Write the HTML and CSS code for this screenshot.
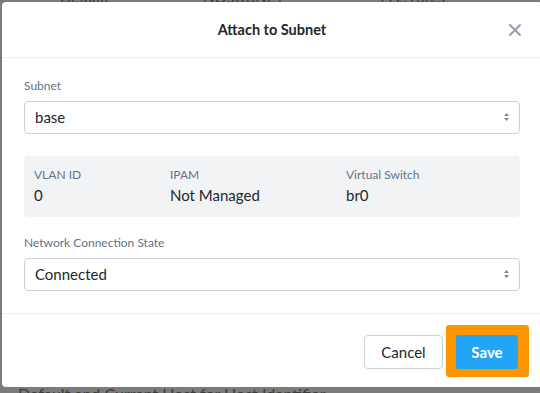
FILE: index.html
```html
<!DOCTYPE html>
<html lang="en">
<head>
  <meta charset="UTF-8" />
  <title>Attach to Subnet</title>
  <link rel="stylesheet" href="styles.css">
</head>
<body>
  <div class="backdrop-text top">Default  NOSUBNET  192.168.5  Linux</div>
  <div class="backdrop-text bottom">Default and Current Host for Host Identifier</div>

  <div class="modal">
    <div class="modal-header">
      <h3>Attach to Subnet</h3>
      <span class="close">
        <svg width="12" height="12" viewBox="0 0 12 12"><path d="M1 1L11 11M11 1L1 11" stroke="#8d9cae" stroke-width="1.8" stroke-linecap="round"/></svg>
      </span>
    </div>

    <div class="modal-body">
      <label class="field-label">Subnet</label>
      <div class="select">
        <span>base</span>
        <svg class="caret" width="7" height="10" viewBox="0 0 7 10"><path d="M3.5 1L6 4H1Z M3.5 9L6 6H1Z" fill="#7b8899"/></svg>
      </div>

      <div class="info-box">
        <div class="info-col vlan">
          <div class="info-label">VLAN ID</div>
          <div class="info-value">0</div>
        </div>
        <div class="info-col ipam">
          <div class="info-label">IPAM</div>
          <div class="info-value">Not Managed</div>
        </div>
        <div class="info-col">
          <div class="info-label">Virtual Switch</div>
          <div class="info-value">br0</div>
        </div>
      </div>

      <label class="field-label">Network Connection State</label>
      <div class="select">
        <span>Connected</span>
        <svg class="caret" width="7" height="10" viewBox="0 0 7 10"><path d="M3.5 1L6 4H1Z M3.5 9L6 6H1Z" fill="#7b8899"/></svg>
      </div>
    </div>

    <div class="modal-footer">
      <button class="btn cancel">Cancel</button>
      <span class="highlight"><button class="btn save">Save</button></span>
    </div>
  </div>
</body>
</html>
```

FILE: styles.css
```css
body {
  margin: 0;
  height: 393px;
  background: #7b7b7b;
  font-family: Lato, 'Open Sans', sans-serif;
  overflow: hidden;
  position: relative;
}

.backdrop-text {
  position: absolute;
  left: 60px;
  color: #3c3c3c;
  font-size: 15px;
  white-space: nowrap;
}

.backdrop-text.top {
  top: -12px;
  word-spacing: 90px;
}

.backdrop-text.bottom {
  top: 384px;
  left: 18px;
  font-size: 16px;
}

.modal {
  position: relative;
  margin: 2px 0 0 2px;
  width: 540px;
  height: 385px;
  background: #fff;
  border-radius: 4px;
  display: flex;
  flex-direction: column;
}

.modal-header {
  height: 55px;
  border-bottom: 1px solid #eceef1;
  display: flex;
  align-items: center;
  justify-content: center;
  position: relative;
}

.modal-header h3 {
  margin: 0;
  font-size: 14.5px;
  font-weight: 700;
  color: #22272e;
}

.close {
  position: absolute;
  right: 21px;
  top: 22px;
  display: flex;
}

.modal-body {
  padding: 20px 22px 22px 22px;
  display: flex;
  flex-direction: column;
  border-bottom: 1px solid #eceef1;
}

.field-label {
  font-size: 12px;
  line-height: 16px;
  color: #627386;
  margin-bottom: 7px;
}

.select {
  box-sizing: border-box;
  height: 33px;
  border: 1px solid #c9d0d8;
  border-radius: 4px;
  display: flex;
  align-items: center;
  justify-content: space-between;
  padding: 0 9px 2px 10px;
  font-size: 15px;
  color: #22272e;
}

.info-box {
  box-sizing: border-box;
  margin: 22px 0 18px;
  height: 61px;
  background: #f2f3f5;
  border-radius: 5px;
  display: flex;
  align-items: center;
  padding: 0 10px 2px;
}

.info-col {
  display: flex;
  flex-direction: column;
  gap: 4px;
}

.info-col.vlan { width: 136px; }
.info-col.ipam { width: 176px; }

.info-label {
  font-size: 12px;
  color: #627386;
}

.info-value {
  font-size: 15px;
  color: #22272e;
}

.modal-footer {
  flex: 1;
  display: flex;
  justify-content: flex-end;
  align-items: flex-start;
  gap: 3px;
  padding: 11px 13px 0 0;
}

.btn {
  height: 34px;
  border-radius: 4px;
  font-family: inherit;
  font-size: 15px;
  cursor: pointer;
}

.cancel {
  width: 79px;
  margin-top: 10px;
  background: #fff;
  border: 1px solid #c9d0d8;
  color: #22272e;
}

.highlight {
  display: flex;
  padding: 10px 11px 8px 10px;
  background: #ff9500;
  border-radius: 3px;
}

.save {
  width: 62px;
  background: #22a5f7;
  border: none;
  color: #fff;
  font-weight: 700;
  border-radius: 2px;
}
```
